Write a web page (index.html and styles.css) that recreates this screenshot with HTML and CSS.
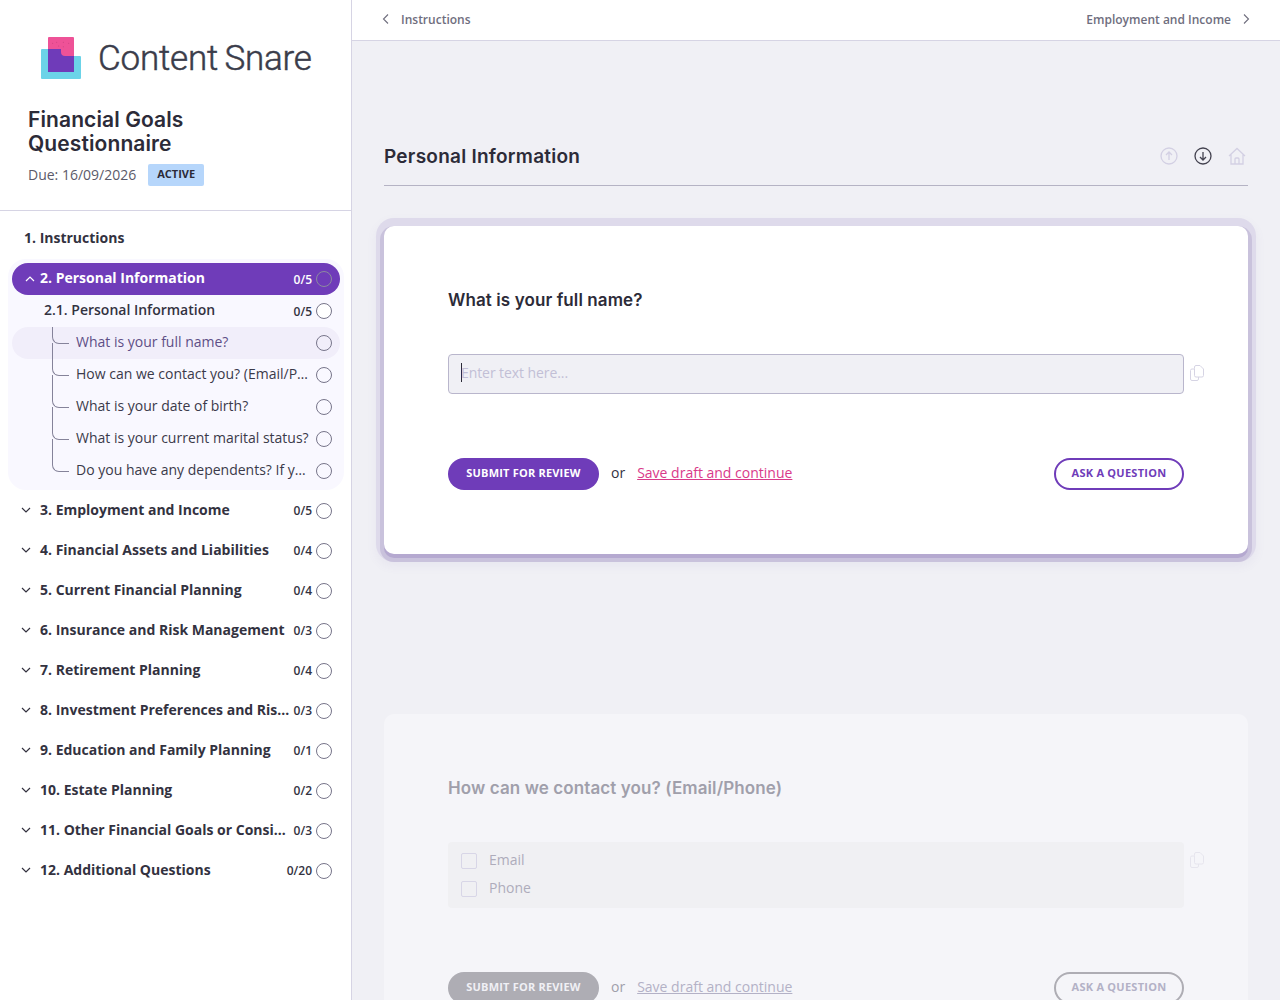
FILE: index.html

```html
<!DOCTYPE html>
<html lang="en">
<head>
    <meta charset="UTF-8">
    <title>Financial Goals Questionnaire</title>
    <link rel="stylesheet" href="styles.css">
</head>
<body>
<div class="app">
    <aside class="sidebar">
        <div class="logo">
            <svg class="logo-mark" width="40" height="42" viewBox="0 0 40 42">
                <path d="M7 1a1 1 0 0 1 1-1h24a1 1 0 0 1 1 1v19H7z" fill="#ee5297"/>
                <g fill="#c8417f"><circle cx="11.700" cy="6.300" r=".5"/><circle cx="15.700" cy="5.300" r=".5"/><circle cx="22.300" cy="5.300" r=".5"/><circle cx="27.700" cy="6.300" r=".5"/><circle cx="17.700" cy="9" r=".5"/><circle cx="22.300" cy="9.700" r=".5"/></g>
                <path d="M0 13a1 1 0 0 1 1-1h6v7h26h6a1 1 0 0 1 1 1v21a1 1 0 0 1-1 1H1a1 1 0 0 1-1-1z" fill="#6bd3e8"/>
                <path d="M7 12h13v3a4 4 0 0 0 4 4h9v16H7z" fill="#6f3bb9"/>
            </svg>
            <span class="logo-text">Content Snare</span>
        </div>
        <div class="snare-info">
            <h1>Financial Goals Questionnaire</h1>
            <div class="due">
                <span class="due-date">Due: 16/09/2026</span>
                <span class="badge">ACTIVE</span>
            </div>
        </div>
        <nav class="nav">
            <div class="row section plain"><span class="row-text">1. Instructions</span></div>

            <div class="panel">
                <div class="row section active">
                    <svg class="chev" width="10" height="10" viewBox="0 0 10 10"><path d="M1 7l4-4 4 4"/></svg>
                    <span class="row-text">2. Personal Information</span>
                    <span class="count">0/5</span><span class="dot"></span>
                </div>
                <div class="row sub">
                    <span class="row-text">2.1. Personal Information</span>
                    <span class="count">0/5</span><span class="dot"></span>
                </div>
                <div class="row q current"><span class="row-text">What is your full name?</span><span class="dot"></span></div>
                <div class="row q"><span class="row-text">How can we contact you? (Email/P…</span><span class="dot"></span></div>
                <div class="row q"><span class="row-text">What is your date of birth?</span><span class="dot"></span></div>
                <div class="row q"><span class="row-text">What is your current marital status?</span><span class="dot"></span></div>
                <div class="row q"><span class="row-text">Do you have any dependents? If y…</span><span class="dot"></span></div>
            </div>

            <div class="row section">
                <svg class="chev" width="10" height="10" viewBox="0 0 10 10"><path d="M1 3l4 4 4-4"/></svg>
                <span class="row-text">3. Employment and Income</span>
                <span class="count">0/5</span><span class="dot"></span>
            </div>
            <div class="row section">
                <svg class="chev" width="10" height="10" viewBox="0 0 10 10"><path d="M1 3l4 4 4-4"/></svg>
                <span class="row-text">4. Financial Assets and Liabilities</span>
                <span class="count">0/4</span><span class="dot"></span>
            </div>
            <div class="row section">
                <svg class="chev" width="10" height="10" viewBox="0 0 10 10"><path d="M1 3l4 4 4-4"/></svg>
                <span class="row-text">5. Current Financial Planning</span>
                <span class="count">0/4</span><span class="dot"></span>
            </div>
            <div class="row section">
                <svg class="chev" width="10" height="10" viewBox="0 0 10 10"><path d="M1 3l4 4 4-4"/></svg>
                <span class="row-text">6. Insurance and Risk Management</span>
                <span class="count">0/3</span><span class="dot"></span>
            </div>
            <div class="row section">
                <svg class="chev" width="10" height="10" viewBox="0 0 10 10"><path d="M1 3l4 4 4-4"/></svg>
                <span class="row-text">7. Retirement Planning</span>
                <span class="count">0/4</span><span class="dot"></span>
            </div>
            <div class="row section">
                <svg class="chev" width="10" height="10" viewBox="0 0 10 10"><path d="M1 3l4 4 4-4"/></svg>
                <span class="row-text">8. Investment Preferences and Ris…</span>
                <span class="count">0/3</span><span class="dot"></span>
            </div>
            <div class="row section">
                <svg class="chev" width="10" height="10" viewBox="0 0 10 10"><path d="M1 3l4 4 4-4"/></svg>
                <span class="row-text">9. Education and Family Planning</span>
                <span class="count">0/1</span><span class="dot"></span>
            </div>
            <div class="row section">
                <svg class="chev" width="10" height="10" viewBox="0 0 10 10"><path d="M1 3l4 4 4-4"/></svg>
                <span class="row-text">10. Estate Planning</span>
                <span class="count">0/2</span><span class="dot"></span>
            </div>
            <div class="row section">
                <svg class="chev" width="10" height="10" viewBox="0 0 10 10"><path d="M1 3l4 4 4-4"/></svg>
                <span class="row-text">11. Other Financial Goals or Consi…</span>
                <span class="count">0/3</span><span class="dot"></span>
            </div>
            <div class="row section">
                <svg class="chev" width="10" height="10" viewBox="0 0 10 10"><path d="M1 3l4 4 4-4"/></svg>
                <span class="row-text">12. Additional Questions</span>
                <span class="count">0/20</span><span class="dot"></span>
            </div>
        </nav>
    </aside>

    <main class="main">
        <div class="topbar">
            <a class="crumb">
                <svg class="crumb-chev" width="10" height="12" viewBox="0 0 10 12"><path d="M7 1.500L2.500 6 7 10.500"/></svg>
                Instructions
            </a>
            <a class="crumb">
                Employment and Income
                <svg class="crumb-chev" width="10" height="12" viewBox="0 0 10 12"><path d="M3 1.500L7.500 6 3 10.500"/></svg>
            </a>
        </div>

        <div class="content">
            <div class="section-head">
                <h2>Personal Information</h2>
                <div class="head-icons">
                    <svg class="icon-faded" width="18" height="18" viewBox="0 0 18 18"><circle cx="9" cy="9" r="8"/><path d="M9 13V5.500M6 8l3-3 3 3"/></svg>
                    <svg class="icon-dark" width="18" height="18" viewBox="0 0 18 18"><circle cx="9" cy="9" r="8"/><path d="M9 5v7.500M6 10l3 3 3-3"/></svg>
                    <svg class="icon-faded" width="18" height="18" viewBox="0 0 18 18"><path d="M1 9l8-7.500L17 9M3 7.500V17h12V7.500M7 17v-5a1 1 0 0 1 1-1h2a1 1 0 0 1 1 1v5"/></svg>
                </div>
            </div>

            <section class="card focused">
                <h3>What is your full name?</h3>
                <div class="field-row">
                    <div class="text-input"><span class="caret"></span>Enter text here...</div>
                    <svg class="copy" width="14" height="16" viewBox="0 0 14 16"><path d="M4.500 3.500V2a1.500 1.500 0 0 1 1.500-1.500h4l3.500 3.500v6.500a1.500 1.500 0 0 1-1.500 1.500H6a1.500 1.500 0 0 1-1.500-1.500z"/><path d="M4.500 4H2A1.500 1.500 0 0 0 .5 5.500V14A1.500 1.500 0 0 0 2 15.500h5a1.500 1.500 0 0 0 1.500-1.500v-2"/></svg>
                </div>
                <div class="actions">
                    <button class="btn-submit">SUBMIT FOR REVIEW</button>
                    <span class="or">or</span>
                    <a class="draft">Save draft and continue</a>
                    <button class="btn-ask">ASK A QUESTION</button>
                </div>
            </section>

            <section class="card dimmed">
                <h3>How can we contact you? (Email/Phone)</h3>
                <div class="field-row">
                    <div class="choices">
                        <label class="choice"><span class="box"></span><span class="choice-text">Email</span></label>
                        <label class="choice"><span class="box"></span><span class="choice-text">Phone</span></label>
                    </div>
                    <svg class="copy" width="14" height="16" viewBox="0 0 14 16"><path d="M4.500 3.500V2a1.500 1.500 0 0 1 1.500-1.500h4l3.500 3.500v6.500a1.500 1.500 0 0 1-1.500 1.500H6a1.500 1.500 0 0 1-1.500-1.500z"/><path d="M4.500 4H2A1.500 1.500 0 0 0 .5 5.500V14A1.500 1.500 0 0 0 2 15.500h5a1.500 1.500 0 0 0 1.500-1.500v-2"/></svg>
                </div>
                <div class="actions">
                    <button class="btn-submit">SUBMIT FOR REVIEW</button>
                    <span class="or">or</span>
                    <a class="draft">Save draft and continue</a>
                    <button class="btn-ask">ASK A QUESTION</button>
                </div>
            </section>
        </div>
    </main>
</div>
</body>
</html>
```

FILE: styles.css

```css
* {
    box-sizing: border-box;
}

html, body {
    margin: 0;
    height: 100%;
    overflow: hidden;
}

body {
    font-family: "Open Sans", Arial, sans-serif;
    font-size: 14px;
    color: #33323f;
    background-color: #f0f0f5;
}

.app {
    display: flex;
    height: 1000px;
    overflow: hidden;
}

/* sidebar */
.sidebar {
    flex: 0 0 352px;
    width: 352px;
    min-width: 0;
    background-color: #ffffff;
    border-right: 1px solid #d6d4e4;
}

.logo {
    display: flex;
    align-items: flex-start;
    height: 100px;
    padding: 37px 0 0 41px;
}

.logo-mark {
    flex: none;
}

.logo-text {
    margin-left: 17px;
    margin-top: 1px;
    font-family: Roboto, Arial, sans-serif;
    font-size: 35px;
    line-height: 42px;
    font-weight: 300;
    letter-spacing: -0.2px;
    word-spacing: -2px;
    color: #3a3c4a;
    -webkit-text-stroke: 0.5px #3a3c4a;
}

.snare-info {
    height: 111px;
    padding: 8px 28px 0;
    border-bottom: 1px solid #d6d4e4;
}

.snare-info h1 {
    margin: 0;
    width: 200px;
    font-family: Inter, Arial, sans-serif;
    font-size: 21px;
    line-height: 24px;
    font-weight: 600;
    letter-spacing: 0.1px;
    color: #2c2b38;
}

.due {
    display: flex;
    align-items: center;
    gap: 12px;
    margin-top: 8px;
    color: #5b5a69;
}

.due-date {
    margin-bottom: 2px;
}

.badge {
    padding: 0 9px;
    height: 22px;
    line-height: 20px;
    font-size: 11px;
    font-weight: 700;
    color: #2c2b38;
    background-color: #b6d6fb;
    border-radius: 2px;
}

.nav {
    padding-top: 7px;
}

.row {
    display: flex;
    align-items: center;
    position: relative;
    padding-right: 8px;
}

.row-text {
    flex: 1;
    min-width: 0;
    margin-bottom: 2px;
    white-space: nowrap;
}

.section {
    height: 40px;
    margin: 0 11px 0 12px;
    padding-left: 28px;
    font-weight: 700;
    color: #33323f;
}

.section.plain {
    padding-left: 12px;
}

.chev {
    position: absolute;
    left: 9px;
    top: 50%;
    margin-top: -5px;
    fill: none;
    stroke: #33323f;
    stroke-width: 1.200;
}

.count {
    margin-left: 4px;
    font-size: 12px;
    font-weight: 600;
    color: #33323f;
}

.dot {
    flex: none;
    width: 16px;
    height: 16px;
    margin-left: 4px;
    margin-top: 1px;
    border: 1px solid #77758a;
    border-radius: 50%;
    background-color: #ffffff;
}

.panel {
    margin: 1px 7px 0 8px;
    padding: 4px 4px 3px;
    background-color: #f9f8ff;
    border-radius: 18px;
}

.panel .section {
    margin: 0;
}

.panel .row-text {
    margin-bottom: 4px;
}

.panel .dot {
    margin-top: 0;
}

.section.active {
    height: 32px;
    color: #ffffff;
    background-color: #6f3cb9;
    border-radius: 16px;
}

.section.active .chev {
    left: 13px;
    stroke: #ffffff;
}

.section.active .count {
    color: #ffffff;
}

.section.active .dot {
    background-color: transparent;
    border-color: #8c8a9e;
}

.sub {
    height: 32px;
    padding-left: 32px;
    font-weight: 600;
}

.q {
    height: 32px;
    padding-left: 64px;
    color: #3b3a4a;
}

.q::before {
    content: "";
    position: absolute;
    left: 40px;
    top: -16px;
    width: 16px;
    height: 32px;
    border-left: 1px solid #85839a;
    border-bottom: 1px solid #85839a;
    border-bottom-left-radius: 7px;
}

.q.current::before {
    top: 0;
    height: 16px;
}

.q.current {
    background-color: #f1eefa;
    border-radius: 16px;
}

.q.current .row-text {
    color: #5e4f86;
}

.q .dot {
    background-color: transparent;
}

/* main column */
.main {
    flex: 1;
    min-width: 0;
}

.topbar {
    display: flex;
    justify-content: space-between;
    align-items: center;
    height: 41px;
    padding: 0 29px 2px 29px;
    background-color: #ffffff;
    border-bottom: 1px solid #d6d4e4;
}

.crumb {
    display: flex;
    align-items: center;
    gap: 10px;
    font-size: 12px;
    font-weight: 600;
    color: #6f6e7e;
}

.crumb-chev {
    fill: none;
    stroke: #6f6e7e;
    stroke-width: 1.100;
}

.content {
    padding: 0 32px;
}

.section-head {
    display: flex;
    justify-content: space-between;
    align-items: center;
    height: 145px;
    padding-top: 86px;
    padding-right: 2px;
    border-bottom: 1px solid #b5b3c4;
}

.section-head h2 {
    margin: 0;
    font-family: Inter, Arial, sans-serif;
    font-size: 19px;
    font-weight: 600;
    letter-spacing: 0.25px;
    color: #2c2b38;
}

.head-icons {
    display: flex;
    gap: 16px;
    stroke-width: 1.300;
}

.icon-faded {
    fill: none;
    stroke: #d3d0e3;
}

.icon-dark {
    fill: none;
    stroke: #43424f;
}

.card {
    height: 328px;
    padding: 64px 64px 0;
    border-radius: 10px;
    background-color: #ffffff;
}

.card h3 {
    margin: 0;
    height: 20px;
    font-family: Inter, Arial, sans-serif;
    font-size: 17px;
    line-height: 20px;
    font-weight: 600;
    letter-spacing: 0.1px;
    color: #2c2b38;
}

.focused {
    margin-top: 40px;
    box-shadow: 0 4px 0 0 #b5a9d0, 0 4px 0 4px #c9c2dc, 0 0 0 8px #dedaeb, 0 4px 10px 9px rgba(120, 100, 170, 0.06);
}

.dimmed {
    margin-top: 160px;
    background-color: #f5f5f9;
}

.dimmed h3 {
    color: #a09fab;
}

.field-row {
    position: relative;
    width: 736px;
    margin-top: 44px;
}

.copy {
    position: absolute;
    left: 742px;
    top: 11px;
    fill: none;
    stroke: #d6d4e4;
    stroke-width: 1;
}

.text-input {
    display: flex;
    align-items: center;
    height: 40px;
    padding-left: 12px;
    padding-bottom: 4px;
    letter-spacing: -0.08px;
    color: #c2bfd6;
    background-color: #f0f0f5;
    border: 1px solid #b9b6cc;
    border-radius: 4px;
}

.caret {
    width: 1px;
    height: 19px;
    margin-right: -1px;
    background-color: #2c2b38;
}

.actions {
    display: flex;
    align-items: center;
    width: 736px;
    margin-top: 64px;
}

.btn-submit, .btn-ask {
    height: 32px;
    padding: 0 0 4px;
    font-family: "Open Sans", Arial, sans-serif;
    font-size: 11px;
    font-weight: 700;
    border-radius: 16px;
    white-space: nowrap;
}

.btn-submit {
    width: 151px;
    letter-spacing: 0.2px;
    color: #ffffff;
    background-color: #6f3cb9;
    border: none;
}

.or {
    margin-left: 12px;
    margin-bottom: 4px;
    color: #33323f;
}

.draft {
    margin-left: 12px;
    margin-bottom: 4px;
    color: #d93a8a;
    text-decoration: underline;
}

.btn-ask {
    width: 130px;
    margin-left: auto;
    letter-spacing: 0.25px;
    color: #6f3cb9;
    background-color: transparent;
    border: 2px solid #6f3cb9;
}

.choices {
    height: 66px;
    padding: 4px 13px;
    background-color: #f0f0f3;
    border-radius: 4px;
}

.choice {
    display: flex;
    align-items: center;
    height: 28px;
    color: #aeacbb;
}

.choice-text {
    margin-bottom: 2px;
}

.box {
    width: 16px;
    height: 16px;
    margin-right: 12px;
    margin-top: 1px;
    border: 1px solid #d8d6e7;
    border-radius: 2px;
}

.dimmed .copy {
    top: 10px;
    stroke: #e6e5ee;
}

.dimmed .or {
    color: #a09fab;
}

.dimmed .draft {
    color: #b3b1c6;
}

.dimmed .btn-submit {
    background-color: #aeadb4;
    color: #f0f0f5;
}

.dimmed .btn-ask {
    color: #b3b1c6;
    border-color: #aeadb4;
}
```
